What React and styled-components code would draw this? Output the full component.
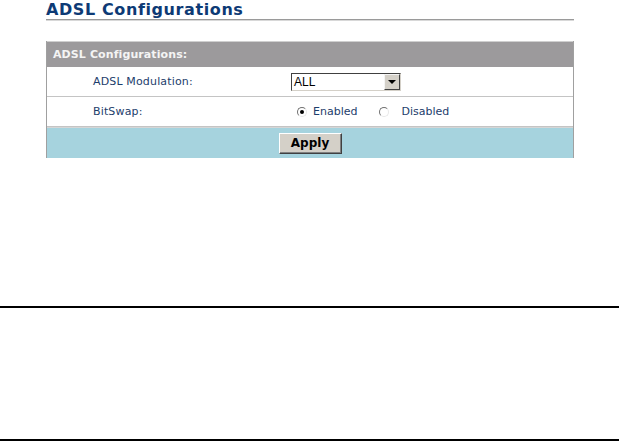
import React, { useState } from 'react';
import styled, { createGlobalStyle } from 'styled-components';

const GlobalStyle = createGlobalStyle`
  html, body {
    margin: 0;
    padding: 0;
    background: #ffffff;
  }
  body {
    font-family: "DejaVu Sans", Verdana, sans-serif;
  }
`;

function App() {
  const [bitSwap, setBitSwap] = useState('enabled');
  return (
    <Page>
      <GlobalStyle />
      <Content>
        <Title>ADSL Configurations</Title>
        <Panel>
          <PanelHeader>ADSL Configurations:</PanelHeader>
          <Row>
            <Label>ADSL Modulation:</Label>
            <Field>
              <SelectBox>
                <SelectValue>ALL</SelectValue>
                <ArrowButton />
              </SelectBox>
            </Field>
          </Row>
          <Row>
            <Label>BitSwap:</Label>
            <Field>
              <RadioOption $lead={6} onClick={() => setBitSwap('enabled')}>
                <Radio checked={bitSwap === 'enabled'} />
                <RadioText $gap={6}>Enabled</RadioText>
              </RadioOption>
              <RadioOption $lead={22} onClick={() => setBitSwap('disabled')}>
                <Radio checked={bitSwap === 'disabled'} />
                <RadioText $gap={12}>Disabled</RadioText>
              </RadioOption>
            </Field>
          </Row>
          <ButtonBar>
            <ApplyButton>Apply</ApplyButton>
          </ButtonBar>
        </Panel>
      </Content>
      <Rule $top={148} />
      <Rule $top={131} />
    </Page>
  );
}

export default App;

const Page = styled.div`
  width: 619px;
  height: 441px;
  overflow: hidden;
`;

const Content = styled.div`
  width: 528px;
  margin-left: 46px;
  padding-top: 2px;
`;

const Title = styled.div`
  font-size: 16px;
  font-weight: bold;
  letter-spacing: 0.6px;
  color: #0d3a75;
  line-height: 16px;
  padding-bottom: 1px;
  border-bottom: 1px solid #9a9a9a;
  box-shadow: 0 1px 0 #d8d8d8;
  white-space: nowrap;
`;

const Panel = styled.div`
  margin-top: 21px;
  border-left: 1px solid #a0a0a0;
  border-right: 1px solid #a0a0a0;
`;

const PanelHeader = styled.div`
  height: 25px;
  line-height: 25px;
  border-top: 1px solid #cfcfcf;
  background: #9c9a9c;
  color: #f4f4f4;
  font-size: 11px;
  font-weight: bold;
  padding-left: 6px;
  letter-spacing: 0.1px;
`;

const Row = styled.div`
  display: flex;
  align-items: center;
  height: 29px;
  background: #ffffff;
  border-bottom: 1px solid #c4c4c4;
`;

const Label = styled.div`
  width: 198px;
  padding-left: 46px;
  font-size: 11px;
  letter-spacing: 0.15px;
  color: #1d3d6b;
`;

const Field = styled.div`
  display: flex;
  align-items: center;
`;

const SelectBox = styled.div`
  display: flex;
  width: 110px;
  height: 18px;
  box-sizing: border-box;
  border-top: 1px solid #404040;
  border-left: 1px solid #404040;
  border-right: 1px solid #d4d0c8;
  border-bottom: 1px solid #d4d0c8;
  background: #ffffff;
`;

const SelectValue = styled.div`
  flex: 1;
  font-family: "Liberation Sans", Arial, sans-serif;
  font-size: 12px;
  line-height: 16px;
  color: #000000;
  padding-left: 2px;
`;

const ArrowButton = styled.div`
  position: relative;
  width: 16px;
  height: 16px;
  box-sizing: border-box;
  background: #d4d0c8;
  border-top: 1px solid #f4f4f4;
  border-left: 1px solid #f4f4f4;
  border-right: 1px solid #404040;
  border-bottom: 1px solid #404040;
  &::after {
    content: '';
    position: absolute;
    left: 3px;
    top: 5px;
    border-left: 4px solid transparent;
    border-right: 4px solid transparent;
    border-top: 4px solid #000000;
  }
`;

const RadioOption = styled.label`
  display: flex;
  align-items: center;
  margin-left: ${(p) => p.$lead}px;
  cursor: pointer;
`;

const Radio = styled.span`
  position: relative;
  width: 8px;
  height: 8px;
  border-radius: 50%;
  border: 1px solid;
  border-color: #707070 #e8e8e8 #e8e8e8 #707070;
  background: #ffffff;
  &::after {
    content: '';
    display: ${(p) => (p.checked ? 'block' : 'none')};
    position: absolute;
    left: 2px;
    top: 2px;
    width: 4px;
    height: 4px;
    border-radius: 50%;
    background: #000000;
  }
`;

const RadioText = styled.span`
  margin-left: ${(p) => p.$gap}px;
  font-size: 11px;
  color: #1d3d6b;
`;

const ButtonBar = styled.div`
  display: flex;
  justify-content: center;
  align-items: center;
  height: 30px;
  border-top: 1px solid #d6d6d6;
  background: #a6d3de;
`;

const ApplyButton = styled.button`
  width: 63px;
  height: 21px;
  padding: 0;
  background: #d4d0c8;
  border: 1px solid;
  border-color: #ffffff #404040 #404040 #ffffff;
  box-shadow: inset -1px -1px 0 #808080;
  font-family: "DejaVu Sans", Verdana, sans-serif;
  font-size: 12px;
  font-weight: bold;
  color: #000000;
`;

const Rule = styled.div`
  height: 2px;
  margin-top: ${(p) => p.$top}px;
  background: #000000;
`;
